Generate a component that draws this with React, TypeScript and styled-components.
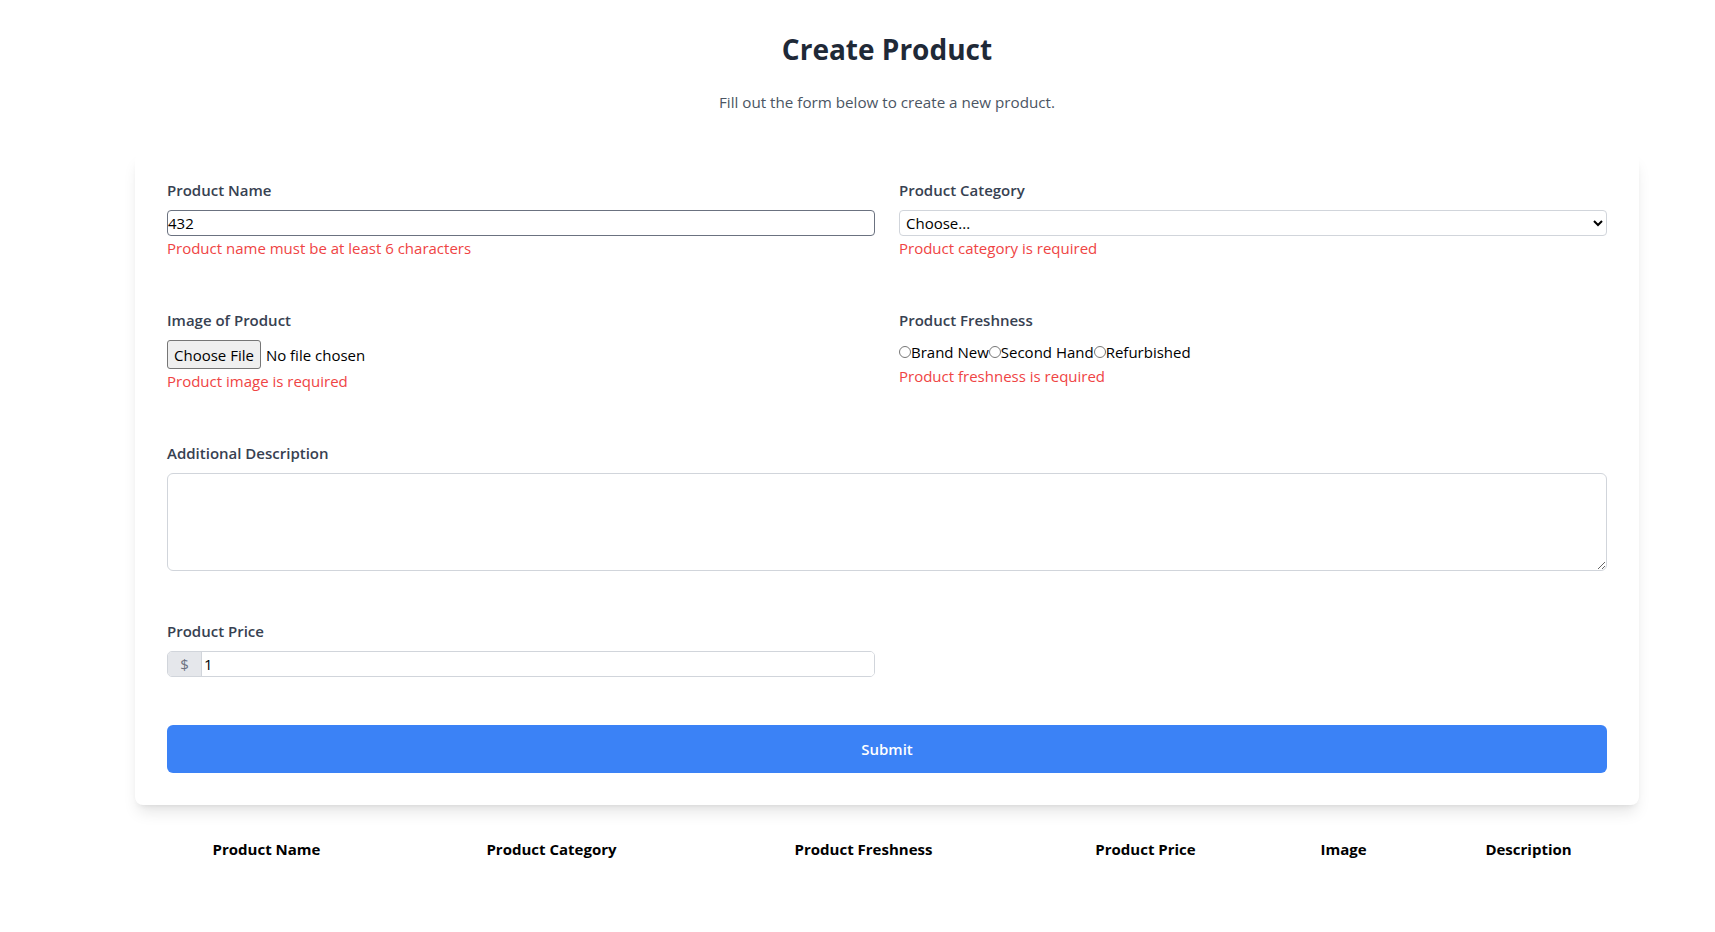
import React from "react";
import styled, { createGlobalStyle } from "styled-components";

const GlobalStyle = createGlobalStyle`
  html, body { margin: 0; padding: 0; background: #ffffff; }
  body {
    font-family: "Open Sans", "Noto Sans", Arial, sans-serif;
    font-size: 15px;
    color: #111827;
  }
  * { box-sizing: border-box; }
`;

const Page = styled.div`
  padding: 31px 76px 40px 135px;
`;

const Header = styled.header`
  display: flex;
  flex-direction: column;
  align-items: center;
`;

const Title = styled.h1`
  margin: 0;
  font-size: 28px;
  line-height: 36px;
  font-weight: 700;
  color: #1f2937;
`;

const Subtitle = styled.p`
  margin: 23px 0 0;
  font-size: 15.2px;
  line-height: 24px;
  color: #4b5563;
`;

const Card = styled.div`
  margin-top: 39px;
  background: #ffffff;
  border-radius: 8px;
  padding: 25px 32px 32px;
  box-shadow: 0 10px 15px -3px rgba(0, 0, 0, 0.1), 0 4px 6px -4px rgba(0, 0, 0, 0.1);
`;

const Form = styled.form`
  display: grid;
  grid-template-columns: 1fr 1fr;
  column-gap: 24px;
  row-gap: 48px;
`;

const Field = styled.div<{ $wide?: boolean }>`
  display: flex;
  flex-direction: column;
  grid-column: ${(p) => (p.$wide ? "1 / span 2" : "auto")};
`;

const Label = styled.label`
  font-size: 15px;
  line-height: 24px;
  font-weight: 600;
  color: #374151;
  margin-bottom: 8px;
`;

const ErrorText = styled.span`
  font-size: 15px;
  line-height: 24px;
  color: #ef4444;
`;

const TextInput = styled.input<{ $dark?: boolean }>`
  height: 26px;
  width: 100%;
  padding: 0;
  font-family: inherit;
  font-size: 15px;
  color: #000;
  border: 1px solid ${(p) => (p.$dark ? "#6b7280" : "#d1d5db")};
  border-radius: 4px;
  outline: none;
  background: #fff;
`;

const Select = styled.select`
  height: 26px;
  width: 100%;
  padding: 0 2px;
  font-family: inherit;
  font-size: 15px;
  color: #000;
  border: 1px solid #d1d5db;
  border-radius: 4px;
  background: #fff;
`;

const FileInput = styled.input`
  font-family: inherit;
  font-size: 15px;
  color: #000;
  height: 29px;
  &::file-selector-button {
    font-family: inherit;
    font-size: 15px;
    height: 29px;
    padding: 0 6px;
    margin-right: 5px;
    background: #efefef;
    border: 1px solid #767676;
    border-radius: 3px;
    color: #000;
  }
`;

const RadioRow = styled.div`
  display: flex;
  align-items: center;
  height: 24px;
  font-size: 15px;
  color: #000;
`;

const RadioLabel = styled.label`
  display: inline-flex;
  align-items: center;
`;

const Radio = styled.input`
  margin: 0;
  width: 12px;
  height: 12px;
`;

const TextArea = styled.textarea`
  width: 100%;
  height: 98px;
  font-family: inherit;
  font-size: 15px;
  border: 1px solid #d1d5db;
  border-radius: 6px;
  padding: 4px;
  display: block;
`;

const PriceGroup = styled.div`
  display: flex;
  height: 26px;
  border: 1px solid #d1d5db;
  border-radius: 5px;
  overflow: hidden;
`;

const Addon = styled.span`
  width: 33px;
  display: flex;
  align-items: center;
  justify-content: center;
  background: #e5e7eb;
  color: #6b7280;
  font-size: 15px;
`;

const PriceInput = styled.input`
  flex: 1;
  border: none;
  border-left: 1px solid #d1d5db;
  padding: 0 2px;
  font-family: inherit;
  font-size: 15px;
  color: #000;
  outline: none;
`;

const SubmitButton = styled.button`
  grid-column: 1 / span 2;
  height: 48px;
  border: none;
  border-radius: 6px;
  background: #3b82f6;
  color: #fff;
  font-family: inherit;
  font-size: 15px;
  font-weight: 600;
  cursor: pointer;
`;

const Table = styled.table`
  margin-top: 24px;
  width: 100%;
  table-layout: fixed;
  border-collapse: collapse;
`;

const Th = styled.th<{ $w: number }>`
  width: ${(p) => p.$w}px;
  padding: 8px 0;
  line-height: 24px;
  font-size: 15px;
  font-weight: 700;
  color: #000;
  text-align: center;
`;

const columns: [string, number][] = [
  ["Product Name", 263],
  ["Product Category", 307],
  ["Product Freshness", 317],
  ["Product Price", 247],
  ["Image", 149],
  ["Description", 221],
];

export default function App() {
  return (
    <>
      <GlobalStyle />
      <Page>
        <Header>
          <Title>Create Product</Title>
          <Subtitle>Fill out the form below to create a new product.</Subtitle>
        </Header>
        <Card>
          <Form onSubmit={(e) => e.preventDefault()}>
            <Field>
              <Label>Product Name</Label>
              <TextInput $dark defaultValue="432" />
              <ErrorText>Product name must be at least 6 characters</ErrorText>
            </Field>
            <Field>
              <Label>Product Category</Label>
              <Select defaultValue="">
                <option value="">Choose...</option>
                <option value="a">Electronics</option>
              </Select>
              <ErrorText>Product category is required</ErrorText>
            </Field>
            <Field>
              <Label>Image of Product</Label>
              <FileInput type="file" />
              <ErrorText>Product image is required</ErrorText>
            </Field>
            <Field>
              <Label>Product Freshness</Label>
              <RadioRow>
                <RadioLabel>
                  <Radio type="radio" name="fresh" />
                  Brand New
                </RadioLabel>
                <RadioLabel>
                  <Radio type="radio" name="fresh" />
                  Second Hand
                </RadioLabel>
                <RadioLabel>
                  <Radio type="radio" name="fresh" />
                  Refurbished
                </RadioLabel>
              </RadioRow>
              <ErrorText>Product freshness is required</ErrorText>
            </Field>
            <Field $wide>
              <Label>Additional Description</Label>
              <TextArea />
            </Field>
            <Field>
              <Label>Product Price</Label>
              <PriceGroup>
                <Addon>$</Addon>
                <PriceInput defaultValue="1" />
              </PriceGroup>
            </Field>
            <SubmitButton type="submit">Submit</SubmitButton>
          </Form>
        </Card>
        <Table>
          <thead>
            <tr>
              {columns.map(([name, w]) => (
                <Th key={name} $w={w}>
                  {name}
                </Th>
              ))}
            </tr>
          </thead>
        </Table>
      </Page>
    </>
  );
}
